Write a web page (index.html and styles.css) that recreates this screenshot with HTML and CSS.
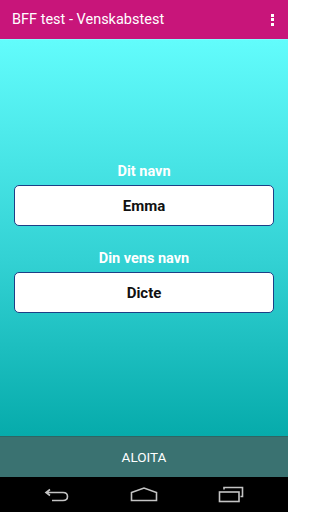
FILE: index.html
```html
<!DOCTYPE html>
<html>
<head>
<meta charset="utf-8">
<link rel="stylesheet" href="styles.css">
</head>
<body>
<div class="screen">
  <header class="appbar">
    <span class="title">BFF test - Venskabstest</span>
    <span class="overflow"><i></i><i></i><i></i></span>
  </header>
  <main class="content">
    <div class="field">
      <div class="label">Dit navn</div>
      <div class="box">Emma</div>
    </div>
    <div class="field">
      <div class="label">Din vens navn</div>
      <div class="box">Dicte</div>
    </div>
  </main>
  <div class="action">ALOITA</div>
  <nav class="navbar">
    <svg class="nav-icon" width="26" height="14" viewBox="0 0 26 14">
      <path d="M6 1.5 L2 4.5 L6 7.5 M2 4.5 H19 Q23.5 4.5 23.5 8.5 Q23.5 12.5 19 12.5 H8" fill="none" stroke="#c4c4c4" stroke-width="1.6"/>
    </svg>
    <svg class="nav-icon" width="28" height="15" viewBox="0 0 28 15">
      <path d="M1.5 5.5 L14 1 L26.5 5.5 V13.5 H1.5 Z" fill="none" stroke="#c4c4c4" stroke-width="1.6"/>
    </svg>
    <svg class="nav-icon" width="26" height="17" viewBox="0 0 26 17">
      <path d="M6 3.5 V1.5 H24.5 V10.5 H22.5" fill="none" stroke="#c4c4c4" stroke-width="1.6"/>
      <rect x="1.5" y="6" width="19.5" height="9.5" fill="none" stroke="#c4c4c4" stroke-width="1.6"/>
    </svg>
  </nav>
</div>
</body>
</html>
```
FILE: styles.css
```css
html, body {
  margin: 0;
  padding: 0;
}
body {
  width: 288px;
  height: 512px;
  overflow: hidden;
  font-family: Roboto, "Noto Sans", sans-serif;
}
.screen {
  display: flex;
  flex-direction: column;
  width: 288px;
  height: 512px;
}
.appbar {
  height: 39px;
  flex: none;
  background: #c8157a;
  display: flex;
  align-items: center;
  justify-content: space-between;
  padding: 0 12px 0 12px;
  box-sizing: border-box;
}
.title {
  color: #ffffff;
  font-size: 14.5px;
  line-height: 20px;
}
.overflow {
  display: flex;
  flex-direction: column;
  gap: 1.5px;
  margin-right: 2px;
}
.overflow i {
  display: block;
  width: 3px;
  height: 3px;
  background: #fff;
}
.content {
  flex: 1;
  background: linear-gradient(to bottom, #62fcfc 0%, #33d2d4 55%, #06abab 100%);
  border-top: 1px solid #7ffefe;
  display: flex;
  flex-direction: column;
  padding: 122px 14px 0 14px;
  gap: 23px;
}
.field {
  display: flex;
  flex-direction: column;
  gap: 3px;
}
.label {
  color: #ffffff;
  font-weight: 700;
  font-size: 14.5px;
  line-height: 20px;
  text-align: center;
}
.box {
  height: 41px;
  box-sizing: border-box;
  background: #ffffff;
  border: 1px solid #1d3f86;
  border-radius: 5px;
  display: flex;
  align-items: center;
  justify-content: center;
  color: #111;
  font-weight: 700;
  font-size: 15px;
}
.action {
  height: 41px;
  flex: none;
  background: #3a7271;
  border-top: 1px solid #2e6664;
  box-sizing: border-box;
  color: #ffffff;
  font-size: 13.5px;
  display: flex;
  align-items: center;
  justify-content: center;
}
.navbar {
  height: 35px;
  flex: none;
  background: #000;
  display: flex;
  align-items: center;
  justify-content: space-around;
  padding: 0 14px;
}
.nav-icon {
  display: block;
}
```
